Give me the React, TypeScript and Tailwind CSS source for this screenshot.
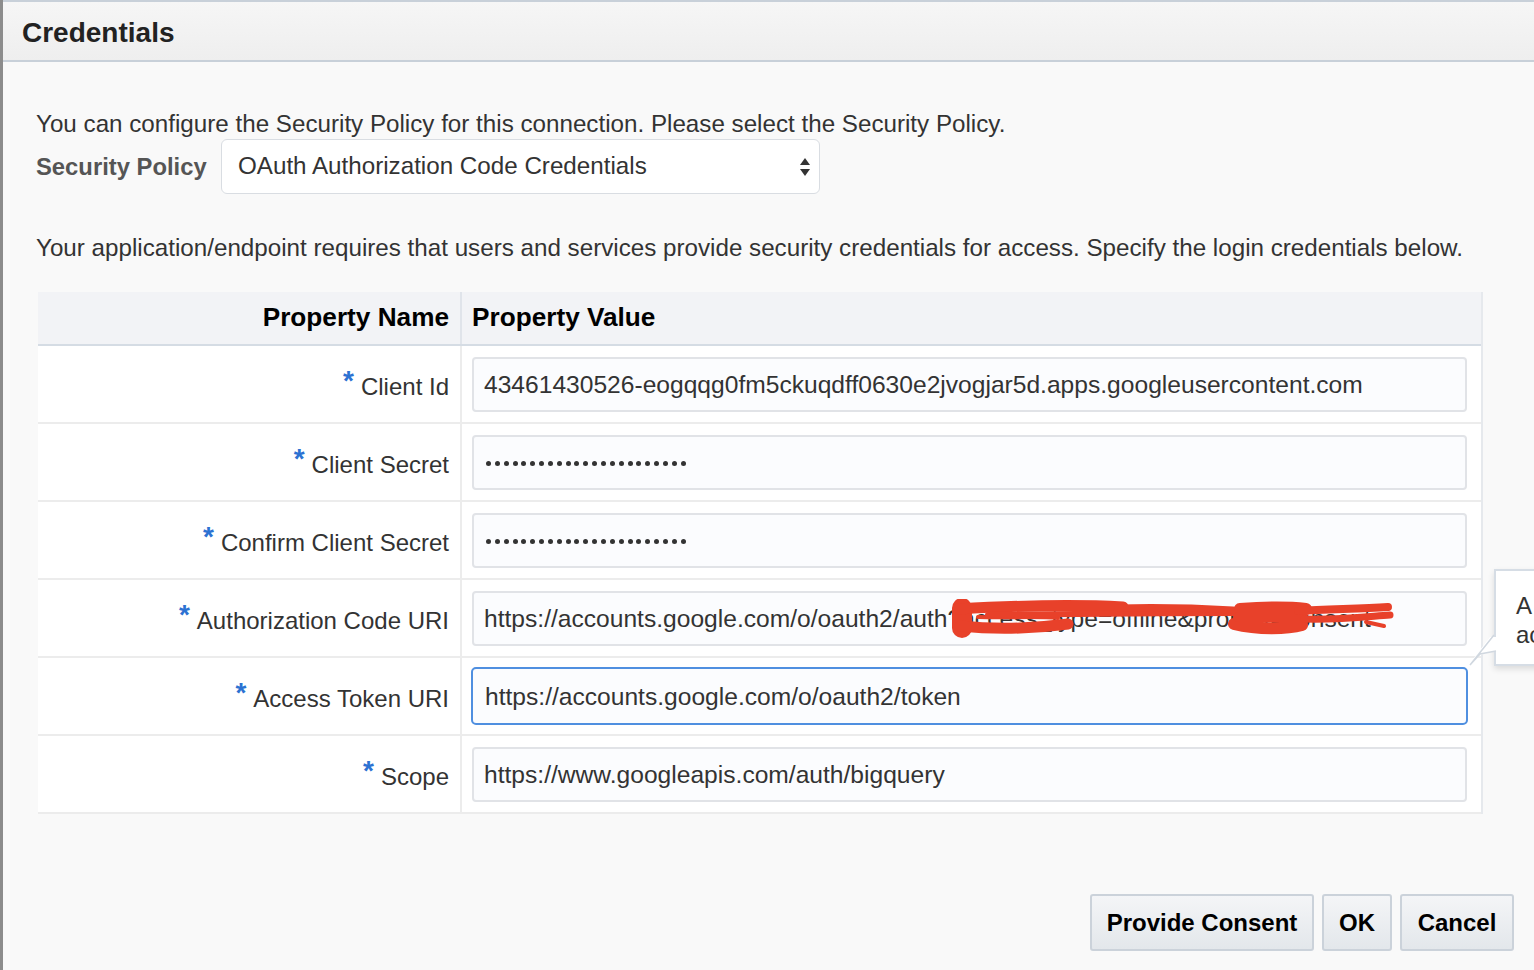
const rows = [
  { label: 'Client Id', value: '43461430526-eogqqg0fm5ckuqdff0630e2jvogjar5d.apps.googleusercontent.com' },
  { label: 'Client Secret', value: '', secret: true },
  { label: 'Confirm Client Secret', value: '', secret: true },
  {
    label: 'Authorization Code URI',
    value: 'https://accounts.google.com/o/oauth2/auth?access_type=offline&prompt=consent',
    redacted: true,
  },
  { label: 'Access Token URI', value: 'https://accounts.google.com/o/oauth2/token', focused: true },
  { label: 'Scope', value: 'https://www.googleapis.com/auth/bigquery' },
]

const dots = Array.from({ length: 23 }, (_, i) => i)

// red marker scribble that hides part of the auth URL
function Scribble() {
  return (
    <svg
      className="pointer-events-none absolute top-[6px] left-[474px] h-[40px] w-[452px]"
      viewBox="0 0 452 40"
      aria-hidden
    >
      <g stroke="#e8412a" fill="none" strokeLinecap="round" strokeLinejoin="round">
        <path d="M14 9 L14 29" strokeWidth="20" />
        <path d="M10 10 C80 6 140 6 175 8" strokeWidth="11" />
        <path d="M12 27 C50 31 90 29 120 25" strokeWidth="11" />
        <path d="M30 18 C60 19 90 17 110 19" strokeWidth="4" />
        <path d="M40 16 C110 15 190 14 290 14" strokeWidth="6" />
        <path d="M170 9 C210 8 250 9 285 11" strokeWidth="7" />
        <path d="M292 10 C320 8 340 8 358 10" strokeWidth="12" />
        <path d="M286 25 C310 31 340 30 354 26" strokeWidth="12" />
        <path d="M290 18 L355 18" strokeWidth="10" />
        <path d="M350 12 C380 10 410 10 440 8" strokeWidth="8" />
        <path d="M356 20 C390 21 415 18 442 16" strokeWidth="7" />
        <path d="M418 23 L436 27" strokeWidth="4" />
      </g>
    </svg>
  )
}

function Tooltip() {
  return (
    <div className="pointer-events-none absolute top-[569px] left-[1494px] h-[97px] w-[80px]">
      <div className="h-full w-full border-2 border-[#d6dde5] bg-white pt-[20px] pl-[20px] text-[24px] leading-[29px] text-[#333] shadow-[0_3px_6px_rgba(0,0,0,0.12)]">
        <div>A</div>
        <div>ac</div>
      </div>
      <svg className="absolute top-[60px] left-[-28px] h-[40px] w-[34px]" viewBox="0 0 34 40" aria-hidden>
        <path d="M30 8 L30 22 L14 26 L4 36 L4 34 L24 8 Z" fill="#fff" />
        <path d="M30 22 L14 25 L4 36 L28 6" fill="none" stroke="#d0d7df" strokeWidth="1.5" />
      </svg>
    </div>
  )
}

export default function App() {
  return (
    <div className="relative flex h-[970px] w-[1534px] overflow-hidden bg-[#f9f9f9] font-['Liberation_Sans',Arial,sans-serif] text-[#333]">
      <div className="w-[3px] shrink-0 bg-[#8c8c8c]" />
      <div className="flex min-w-0 flex-1 flex-col">
        <div className="flex h-[62px] shrink-0 items-center border-t-2 border-b-2 border-[#c8d0d9] bg-gradient-to-b from-[#f6f6f6] to-[#eeeeee] pt-[3px] pl-[19px]">
          <h1 className="text-[28px] font-bold text-[#222]">Credentials</h1>
        </div>

        <div className="flex flex-1 flex-col pt-[48px] pr-[20px] pl-[33px]">
          <p className="text-[24.2px] leading-[28px]">
            You can configure the Security Policy for this connection. Please select the Security Policy.
          </p>
          <div className="mt-[1px] flex items-center">
            <span className="w-[185px] shrink-0 text-[23.8px] font-bold text-[#555]">Security Policy</span>
            <div className="flex h-[55px] w-[599px] items-center justify-between rounded-[6px] border border-[#d9dde2] bg-white pr-[8px] pl-[16px]">
              <span className="text-[24.2px]">OAuth Authorization Code Credentials</span>
              <svg className="h-[24px] w-[12px]" viewBox="0 0 12 24" aria-hidden>
                <path d="M6 3 L11 10 L1 10 Z" fill="#333" />
                <path d="M6 21 L11 14 L1 14 Z" fill="#333" />
              </svg>
            </div>
          </div>

          <p className="mt-[40px] text-[24.2px] leading-[28px]">
            Your application/endpoint requires that users and services provide security credentials for access. Specify the login credentials below.
          </p>

          <div className="mt-[30px] ml-[2px] w-[1445px] border-r-2 border-[#e6e9ed]">
            <div className="grid h-[54px] grid-cols-[424px_1fr] border-b-2 border-[#d5dce4] bg-[#f2f3f6] text-[26.2px] font-bold text-black">
              <div className="flex items-center justify-end border-r-2 border-[#e0e4ea] pr-[11px]">Property Name</div>
              <div className="flex items-center pl-[10px]">Property Value</div>
            </div>
            {rows.map((r) => (
              <div key={r.label} className="grid h-[78px] grid-cols-[424px_1fr] border-b-2 border-[#ececec] bg-white">
                <div className="flex items-center justify-end border-r-2 border-[#ececec] pt-[5px] pr-[11px] text-[24px]">
                  <span className="relative -top-[6px] mr-[7px] text-[28px] leading-none font-bold text-[#2c72d2]">*</span>
                  <span>{r.label}</span>
                </div>
                <div className="flex items-center pr-[14px] pl-[10px]">
                  <div
                    className={
                      r.focused
                        ? '-mx-[1px] relative flex h-[58px] w-[calc(100%+2px)] items-center rounded-[5px] border-2 border-[#4f8fe0] bg-[#fbfcfe] pt-[3px] pl-[12px] text-[24.6px] whitespace-nowrap'
                        : 'relative flex h-[55px] w-full items-center rounded-[4px] border-2 border-[#e1e3e7] bg-[#fbfcfe] pt-[3px] pl-[10px] text-[24.6px] whitespace-nowrap'
                    }
                  >
                    {r.secret ? (
                      <div className="flex gap-[3.85px] pl-[2px]">
                        {dots.map((d) => (
                          <span key={d} className="h-[5px] w-[5px] rounded-full bg-[#333]" />
                        ))}
                      </div>
                    ) : (
                      <span>{r.value}</span>
                    )}
                    {r.redacted && <Scribble />}
                  </div>
                </div>
              </div>
            ))}
          </div>

          <div className="mt-[80px] flex justify-end gap-[8px]">
            {[
              { t: 'Provide Consent', w: 'w-[224px]' },
              { t: 'OK', w: 'w-[70px]' },
              { t: 'Cancel', w: 'w-[114px]' },
            ].map((b) => (
              <button
                key={b.t}
                className={`${b.w} h-[57px] rounded-[3px] border-2 border-[#cbd2da] bg-gradient-to-b from-[#f4f5f7] to-[#e3e7eb] text-[24px] font-bold text-black`}
              >
                {b.t}
              </button>
            ))}
          </div>
        </div>
      </div>
      <Tooltip />
    </div>
  )
}
